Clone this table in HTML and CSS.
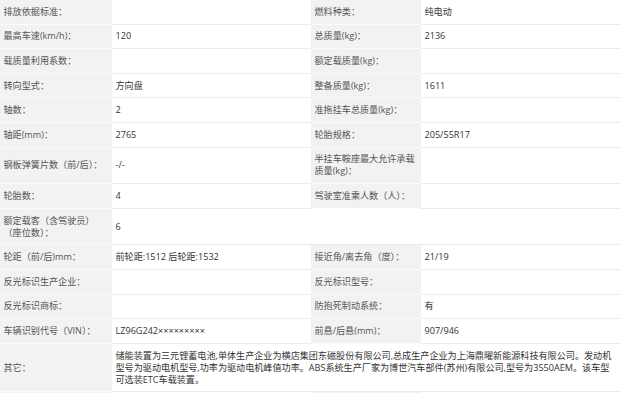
FILE: index.html
```html
<!DOCTYPE html>
<html lang="zh-CN">
<head>
<meta charset="utf-8">
<title>参数</title>
<link rel="stylesheet" href="styles.css">
</head>
<body>
<table class="spec">
  <colgroup>
    <col class="c-label1">
    <col class="c-value1">
    <col class="c-label2">
    <col class="c-value2">
  </colgroup>
  <tbody>
    <tr>
      <td class="label">排放依据标准：</td><td class="value"></td>
      <td class="label">燃料种类：</td><td class="value">纯电动</td>
    </tr>
    <tr>
      <td class="label">最高车速(km/h)：</td><td class="value">120</td>
      <td class="label">总质量(kg)：</td><td class="value">2136</td>
    </tr>
    <tr>
      <td class="label">载质量利用系数：</td><td class="value"></td>
      <td class="label">额定载质量(kg)：</td><td class="value"></td>
    </tr>
    <tr>
      <td class="label">转向型式：</td><td class="value">方向盘</td>
      <td class="label">整备质量(kg)：</td><td class="value">1611</td>
    </tr>
    <tr>
      <td class="label">轴数：</td><td class="value">2</td>
      <td class="label">准拖挂车总质量(kg)：</td><td class="value"></td>
    </tr>
    <tr>
      <td class="label">轴距(mm)：</td><td class="value">2765</td>
      <td class="label">轮胎规格：</td><td class="value">205/55R17</td>
    </tr>
    <tr>
      <td class="label">钢板弹簧片数（前/后）：</td><td class="value">-/-</td>
      <td class="label">半挂车鞍座最大允许承载<br>质量(kg)：</td><td class="value"></td>
    </tr>
    <tr>
      <td class="label">轮胎数：</td><td class="value">4</td>
      <td class="label">驾驶室准乘人数（人）：</td><td class="value"></td>
    </tr>
    <tr>
      <td class="label">额定载客（含驾驶员）<br>（座位数）：</td><td class="value">6</td>
      <td class="value" colspan="2"></td>
    </tr>
    <tr>
      <td class="label">轮距（前/后)mm：</td><td class="value">前轮距:1512 后轮距:1532</td>
      <td class="label">接近角/离去角（度）：</td><td class="value">21/19</td>
    </tr>
    <tr>
      <td class="label">反光标识生产企业：</td><td class="value"></td>
      <td class="label">反光标识型号：</td><td class="value"></td>
    </tr>
    <tr>
      <td class="label">反光标识商标：</td><td class="value"></td>
      <td class="label">防抱死制动系统：</td><td class="value">有</td>
    </tr>
    <tr>
      <td class="label">车辆识别代号（VIN）：</td><td class="value">LZ96G242×××××××××</td>
      <td class="label">前悬/后悬(mm)：</td><td class="value">907/946</td>
    </tr>
    <tr>
      <td class="label">其它：</td>
      <td class="value long" colspan="3">储能装置为三元锂蓄电池,单体生产企业为横店集团东磁股份有限公司,总成生产企业为上海鼎曜新能源科技有限公司。发动机<br>型号为驱动电机型号,功率为驱动电机峰值功率。ABS系统生产厂家为博世汽车部件(苏州)有限公司,型号为3550AEM。该车型<br>可选装ETC车载装置。</td>
    </tr>
    <tr>
      <td class="label">&nbsp;</td><td class="value"></td>
      <td class="label">&nbsp;</td><td class="value"></td>
    </tr>
  </tbody>
</table>
</body>
</html>
```

FILE: styles.css
```css
html, body {
  margin: 0;
  padding: 0;
  background: #ffffff;
}

body {
  width: 620px;
  height: 393px;
  overflow: hidden;
  font-family: "Open Sans", "Noto Sans CJK SC", sans-serif;
  font-size: 9.1px;
}

.spec {
  width: 620px;
  table-layout: fixed;
  border-collapse: separate;
  border-spacing: 0;
}

.c-label1 { width: 112px; }
.c-value1 { width: 199px; }
.c-label2 { width: 110px; }
.c-value2 { width: 199px; }

.spec td {
  padding: 5.8px 3px 5.8px 3.5px;
  line-height: 12px;
  vertical-align: middle;
  border-bottom: 1px solid #ebebeb;
  white-space: normal;
}

.spec .label {
  background: #f2f2f2;
  color: #555555;
  border-bottom-color: #fbfbfb;
  font-family: "Open Sans", "Noto Sans CJK JP", "Noto Sans CJK SC", sans-serif;
}

.spec .value {
  background: #ffffff;
  color: #333333;
}

.spec .long {
  white-space: nowrap;
}
```
